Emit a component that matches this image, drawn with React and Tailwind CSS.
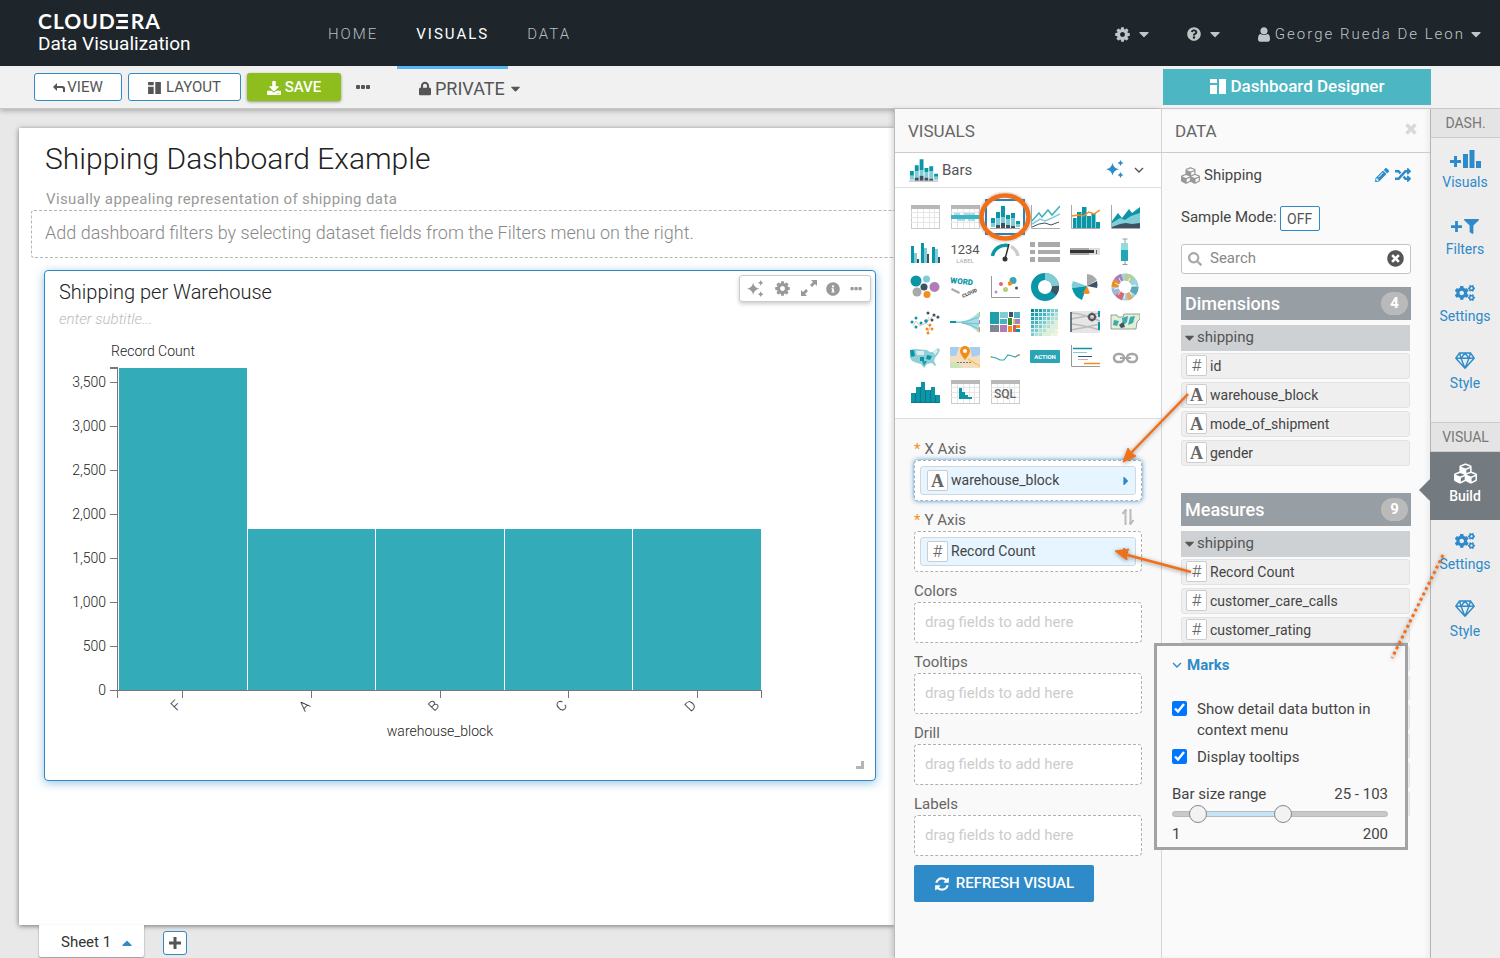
import { useState } from "react";
import { clsx } from "clsx";
import {
	FaCaretDown,
	FaCaretRight,
	FaCaretUp,
	FaCogs,
	FaCubes,
	FaDownload,
	FaFilter,
	FaInfoCircle,
	FaLock,
	FaPencilAlt,
	FaQuestionCircle,
	FaRandom,
	FaSearch,
	FaTimesCircle,
} from "react-icons/fa";

const TEAL = "#0b96a8";
const SKY = "#80cdd8";
const SLATE = "#3d5263";
const GRAY = "#a9a9a9";
const ORANGE = "#f28c1c";

const CogIcon = ({ className }) => (
	<svg className={className} viewBox="0 0 1792 1792" fill="currentColor">
		<path d="M1152 896q0-106-75-181t-181-75-181 75-75 181 75 181 181 75 181-75 75-181zm512-109v222q0 12-8 23t-20 13l-185 28q-19 54-39 91 35 50 107 138 10 12 10 25t-9 23q-27 37-99 108t-94 71q-12 0-26-9l-138-108q-44 23-91 38-16 136-29 186-7 28-36 28h-222q-14 0-24.500-8.500t-11.500-21.500l-28-184q-49-16-90-37l-141 107q-10 9-25 9-14 0-25-11-126-114-165-168-7-10-7-23 0-12 8-23 15-21 51-66.500t54-70.500q-27-50-41-99l-183-27q-13-2-21-12.500t-8-23.500v-222q0-12 8-23t19-13l186-28q14-46 39-92-40-57-107-138-10-12-10-24 0-10 9-23 26-36 98.500-107.500t94.500-71.500q13 0 26 10l138 107q44-23 91-38 16-136 29-186 7-28 36-28h222q14 0 24.500 8.500t11.500 21.500l28 184q49 16 90 37l142-107q9-9 24-9 13 0 25 10 129 119 165 170 7 8 7 22 0 12-8 23-15 21-51 66.500t-54 70.500q26 50 41 98l183 28q13 2 21 12.500t8 23.500z" />
	</svg>
);

const UserIcon = ({ className }) => (
	<svg className={className} viewBox="256 0 1280 1792" fill="currentColor">
		<path d="M1536 1399q0 109-62.500 187t-150.500 78h-854q-88 0-150.500-78t-62.500-187q0-85 8.500-160.500t31.500-152 58.500-131 94-89 134.500-34.500q131 128 313 128t313-128q76 0 134.500 34.500t94 89 58.500 131 31.500 152 8.500 160.500zm-256-887q0 159-112.500 271.500t-271.500 112.500-271.500-112.500-112.500-271.500 112.500-271.500 271.500-112.500 271.500 112.500 112.500 271.500z" />
	</svg>
);

const RefreshIcon = ({ className }) => (
	<svg className={className} viewBox="0 0 1792 1792" fill="currentColor">
		<path d="M1639 1056q0 5-1 7-64 268-268 434.500t-478 166.500q-146 0-282.500-55t-243.500-157l-129 129q-19 19-45 19t-45-19-19-45v-448q0-26 19-45t45-19h448q26 0 45 19t19 45-19 45l-137 137q71 66 161 102t187 36q134 0 250-65t186-179q11-17 53-117 8-23 30-23h192q13 0 22.500 9.500t9.500 22.500zm25-800v448q0 26-19 45t-45 19h-448q-26 0-45-19t-19-45 19-45l138-138q-148-137-349-137-134 0-250 65t-186 179q-11 17-53 117-8 23-30 23h-199q-13 0-22.500-9.500t-9.500-22.500v-7q65-268 270-434.500t480-166.500q146 0 284 55.500t245 156.500l130-129q19-19 45-19t45 19 19 45z" />
	</svg>
);

const LayoutIcon = ({ className }) => (
	<svg className={className} viewBox="0 0 16 15" fill="currentColor">
		<path d="M0 0h7v4H0zM0 6h7v9H0zM9 0h7v15H9z" />
	</svg>
);

const SparkleIcon = ({ className }) => (
	<svg className={className} viewBox="0 0 18 18" fill="currentColor">
		<path d="M6.500 3Q7.500 8.300 13 9.300 7.500 10.300 6.500 15.600 5.500 10.300 0 9.300 5.500 8.300 6.500 3Z" />
		<path d="M14.500 0q.5 2.500 3 3-2.500.5-3 3-.5-2.500-3-3 2.500-.5 3-3ZM14.500 12q.5 2.500 3 3-2.500.5-3 3-.5-2.500-3-3 2.500-.5 3-3Z" />
	</svg>
);

const DotsIcon = ({ className }) => (
	<svg className={className} viewBox="0 0 15 5" fill="currentColor">
		<rect width="4" height="4" rx="1" />
		<rect x="5" width="4" height="4" rx="1" />
		<rect x="10" width="4" height="4" rx="1" />
	</svg>
);

const BackIcon = ({ className }) => (
	<svg className={className} viewBox="0 0 12 10" fill="currentColor">
		<path d="M4 0v3h5.500Q12 3 12 5.500V9h-2V6.500Q10 5 9 5H4v3L0 4Z" />
	</svg>
);

const PlusIcon = ({ className }) => (
	<svg className={className} viewBox="0 0 12 12" fill="currentColor">
		<path d="M4.500 0h3v4.500H12v3H7.500V12h-3V7.500H0v-3h4.500z" />
	</svg>
);

const CloseIcon = ({ className }) => (
	<svg className={className} viewBox="0 0 12 12" stroke="currentColor" strokeWidth="3.500">
		<path d="m1.500 1.500 9 9M10.500 1.500l-9 9" />
	</svg>
);

const ExpandIcon = ({ className }) => (
	<svg className={className} viewBox="0 0 16 16" fill="currentColor">
		<path d="M10 0h6v6l-2-2-3 3-2-2 3-3ZM0 16v-6l2 2 3-3 2 2-3 3 2 2Z" />
	</svg>
);

const DiamondIcon = ({ className }) => (
	<svg
		className={className}
		viewBox="0 0 20 17"
		fill="none"
		stroke="currentColor"
		strokeWidth="1.4"
		strokeLinejoin="round"
	>
		<path d="M4.500 1h11L19.200 6.200 10 16.200.8 6.200ZM.8 6.200h18.400M6 6.200l4 10 4-10L10 1Z" />
		<path d="M4.500 1 6 6.200M15.500 1 14 6.200" />
	</svg>
);

const AddVisualIcon = ({ className }) => (
	<svg className={className} viewBox="0 0 31 18" fill="currentColor">
		<path d="M4 6h3v4h4v3H7v4H4v-4H0v-3h4zM13 4h5v14h-5zM19.500 0h5v18h-5zM26 11h5v7h-5z" />
	</svg>
);

const ChevronIcon = ({ className }) => (
	<svg
		className={className}
		viewBox="0 0 10 6"
		fill="none"
		stroke="currentColor"
		strokeWidth="1.4"
	>
		<path d="m1 1 4 4 4-4" />
	</svg>
);

const SwapIcon = ({ className }) => (
	<svg
		className={className}
		viewBox="0 0 12 16"
		fill="none"
		stroke="currentColor"
		strokeWidth="2"
	>
		<path d="M3.500 16V2M.5 5l3-4 1 1.500M8.500 0v14M11.500 11l-3 4-1-1.500" />
	</svg>
);

const gridLines = (
	<path
		d="M1 9.500h28M1 14.500h28M1 19.500h28M7.500 5v20M13.500 5v20M19.500 5v20M24.500 5v20"
		stroke="#e6e6e6"
		fill="none"
	/>
);

const tableFrame = (
	<>
		<rect x="1.500" y="3.500" width="28" height="22" fill="#fff" stroke="#ccc" />
		{gridLines}
		<rect x="1" y="2" width="29" height="4" fill="#b8b8b8" />
	</>
);

const stackedBars = (
	<>
		<path
			d="M1 15h4v5H1zM6 9h4v6H6zM11 3h4v11h-4zM16 12h4v4h-4zM21 10h4v5h-4zM26 18h4v3h-4z"
			fill={TEAL}
		/>
		<path
			d="M1 20h4v4H1zM6 15h4v8H6zM11 14h4v6h-4zM16 16h4v6h-4zM21 15h4v8h-4zM26 21h4v3h-4z"
			fill={SKY}
		/>
		<path d="M6 22h4v3H6zM11 20h4v5h-4zM16 22h4v3h-4zM21 23h4v2h-4z" fill={SLATE} />
		<path d="M0 25.500h30" stroke="#aaa" />
	</>
);

const axes = <path d="M1.500 2v23.500H30" stroke="#aaa" fill="none" />;

const heatColors = ["#0b7f90", "#1f9dae", "#46b4c0", "#7ccbd0", "#b0dfd3", "#e3f1d0", "#f7f6d6"];

// thumbnails of the chart types, all on a 30x28 canvas
const chartTypes = [
	["Table", tableFrame],
	[
		"Crosstab",
		<>
			{tableFrame}
			<rect x="1" y="12" width="29" height="4" fill="#3fb4c2" />
			<path d="M4 10h6v2H4zM14 10h11v2H14zM7 16h8v2H7zM18 16h7v2h-7z" fill="#a8e0e6" />
		</>,
	],
	["Bars", stackedBars],
	[
		"Lines",
		<g fill="none">
			{axes}
			<path d="m2 18 7-8 3 4 6-7 4 5 8-9" stroke="#3fb0bf" strokeWidth="1.500" />
			<path d="m2 21 8-5 5 2 7-3 8-4" stroke={SKY} strokeWidth="1.500" />
			<path d="m2 24 7-3 6-1 6 2 8-3" stroke={SLATE} />
		</g>,
	],
	[
		"Combo",
		<>
			{axes}
			<path
				d="M3 15h3.500v10H3zM7 9h4.500v16H7zM12 4h4.500v21H12zM17 13h4v12h-4zM21.500 10h4v15h-4zM26 19h4v6h-4z"
				fill={TEAL}
			/>
			<path d="m2 13 6-1 5 1 6-4 5 2 6-4" fill="none" stroke={ORANGE} strokeWidth="1.500" />
		</>,
	],
	[
		"Areas",
		<>
			<path d="m2 18 6-8 4 5 7-9 3 4 8-6v21H2z" fill={TEAL} />
			<path d="m2 20 8-5 5 2 6-4 9-3v15H2z" fill={SKY} />
			<path d="m2 24 8-3 6-1 6 1 8-1v5H2z" fill={SLATE} />
			{axes}
		</>,
	],
	[
		"Grouped Bars",
		<>
			<path d="M1 8h3v17H1zM11 5h3v20h-3zM22 9h3v16h-3z" fill={TEAL} />
			<path d="M4 15h3v10H4zM14 10h3v15h-3zM25 11h3v14h-3z" fill={SKY} />
			<path d="M7 21h2v4H7zM17 16h2v9h-2zM28 19h2v6h-2z" fill={SLATE} />
		</>,
	],
	[
		"KPI",
		<g fontFamily="Roboto" textAnchor="middle">
			<text x="15" y="16" fontSize="13" fill="#555">
				1234
			</text>
			<text x="15" y="25" fontSize="6" fill="#aaa">
				LABEL
			</text>
		</g>,
	],
	[
		"Gauge",
		<g fill="none" strokeWidth="3.500">
			<path d="M2.500 18A13 13 0 0 1 18 7.500" stroke={TEAL} />
			<path d="M21 8.500A13 13 0 0 1 28 18" stroke="#ccc" />
			<path d="M15 21 19 6" stroke="#333" strokeWidth="1.500" />
			<circle cx="15" cy="21" r="2.500" fill="#333" stroke="none" />
		</g>,
	],
	[
		"List",
		<path
			d="M0 4h5v5H0zM8 4h22v5H8zM0 12h5v4H0zM8 12h22v4H8zM0 19h5v5H0zM8 19h22v5H8z"
			fill="#aaa"
		/>,
	],
	[
		"Bullet",
		<>
			<rect y="10" width="30" height="7" fill="#ddd" />
			<rect y="10" width="19" height="7" fill="#aaa" />
			<rect y="12" width="24" height="3" fill="#333" />
			<rect x="26" y="12" width="1" height="4" fill="#666" />
		</>,
	],
	[
		"Box Plot",
		<>
			<path d="M15 1v26M12.500 1h5M12.500 26.500h5" stroke="#999" />
			<rect x="11" y="5" width="7" height="7" fill="#8fdbe2" />
			<rect x="11" y="12" width="7" height="11" fill="#1fa7b6" />
		</>,
	],
	[
		"Bubbles",
		<>
			<circle cx="6" cy="8" r="5.500" fill={TEAL} />
			<circle cx="16.500" cy="6" r="3.500" fill={SKY} />
			<circle cx="24.500" cy="14" r="5" fill="#b07cb8" />
			<circle cx="14" cy="14" r="3.500" fill={SLATE} />
			<circle cx="7" cy="19" r="4.500" fill={GRAY} />
			<circle cx="17" cy="21.500" r="3.500" fill={ORANGE} />
		</>,
	],
	[
		"Word Cloud",
		<g fontFamily="Roboto" fontWeight="900">
			<text x="0" y="10" fontSize="8" fill={TEAL} transform="rotate(6 0 10)">
				WORD
			</text>
			<text x="13" y="25" fontSize="5" fill="#555" transform="rotate(-25 13 25)">
				CLOUD
			</text>
			<path d="m2 15 8 4-1 2-8-4z" fill="#aaa" />
		</g>,
	],
	[
		"Scatter",
		<>
			<path d="M1.500 3v21.500H30" stroke="#999" fill="none" />
			<circle cx="23" cy="7.500" r="3.500" fill="#3aa5b3" />
			<circle cx="20" cy="10.500" r="2.200" fill={ORANGE} />
			<circle cx="11" cy="11" r="2" fill="#e8636b" />
			<circle cx="15.500" cy="16.500" r="2.500" fill="#b6cf7a" />
			<circle cx="6" cy="19" r="1.500" fill="#c08fc6" />
			<circle cx="26.500" cy="15" r="1.500" fill={SLATE} />
		</>,
	],
	[
		"Donut",
		<g fill="none" strokeWidth="7">
			<circle cx="15" cy="14" r="10.500" stroke={TEAL} />
			<path d="M15 3.500a10.500 10.500 0 0 1 10.500 10.500" stroke={SKY} />
			<path d="M25.500 13a10.500 10.500 0 0 1-2 7" stroke={SLATE} />
		</g>,
	],
	[
		"Radial",
		<>
			<path d="M17 13V1q6 0 10 6z" fill={GRAY} />
			<path d="m17 13 10-5q1 4 0 7z" fill={SLATE} />
			<path d="M17 13 3 8q-2 4-1 7z" fill={SKY} />
			<path d="M17 13 2 15q2 9 10 12z" fill={TEAL} />
			<path d="m17 13-4 7q4 2 7 0z" fill={ORANGE} />
		</>,
	],
	[
		"Chord",
		<g fill="none" strokeWidth="7">
			<circle cx="15" cy="14" r="10" stroke="#9fd3dc" />
			<path d="M15 4a10 10 0 0 1 7 3" stroke="#b6cf9a" />
			<path d="M7 8a10 10 0 0 1 5-4" stroke="#b07cb8" />
			<path d="M5 14a10 10 0 0 1 2-6" stroke={ORANGE} />
			<path d="M7 20a10 10 0 0 1-2-5" stroke="#9db8d8" />
			<path d="M13 24a10 10 0 0 1-5-4" stroke="#d4687c" />
			<path d="M21 22a10 10 0 0 1-4 2" stroke="#e9a66a" />
			<path d="M25 14a10 10 0 0 1-2 6" stroke="#5aa7b8" />
			<path
				d="m9 5 2 4M5 10l4 2M4 16l5-1M8 22l3-4M20 5l-2 4M26 12l-5 1M22 22l-3-4M14 26l1-5"
				stroke="#fff"
				strokeWidth=".8"
			/>
		</g>,
	],
	[
		"Network",
		<>
			<path d="m3 18 3-5 4 5 6-3 3-6M16 15l5-5 3-3 4 4M16 15l4 4-2 5" stroke="#ccc" fill="none" />
			<g fill={TEAL}>
				<circle cx="2" cy="14" r="1.500" />
				<circle cx="6" cy="10" r="1.500" />
				<circle cx="6" cy="19" r="1.500" />
				<circle cx="11" cy="15" r="1.500" />
				<circle cx="16" cy="13" r="1.800" />
			</g>
			<g fill={SLATE}>
				<circle cx="18" cy="5" r="1.500" />
				<circle cx="24" cy="7" r="1.500" />
				<circle cx="28" cy="9" r="1.500" />
				<circle cx="22" cy="12" r="1.500" />
			</g>
			<g fill={ORANGE}>
				<circle cx="20" cy="17" r="1.500" />
				<circle cx="17" cy="21" r="1.500" />
				<circle cx="22" cy="21" r="1.500" />
				<circle cx="18" cy="25" r="1.500" />
			</g>
		</>,
	],
	[
		"Flow",
		<>
			<path d="M0 14h10Q20 13 29 4v21Q20 16 10 15H0z" fill="#a9dce3" />
			<path d="M4 14h8q8-1 17-5M12 15q8 0 17 1M12 15q8 1 17 6" stroke="#5cbcc8" fill="none" strokeWidth=".8" />
			<path d="M0 14h6" stroke={TEAL} strokeWidth="2" />
			<path d="M29.500 4v5" stroke="#b6cf7a" />
			<path d="M29.500 12v4" stroke="#b07cb8" />
			<path d="M29.500 19v5" stroke={ORANGE} />
		</>,
	],
	[
		"Treemap",
		<>
			<path d="M0 4h9v12H0z" fill="#1d9fae" />
			<path d="M10 4h8v6h-8z" fill={SKY} />
			<path d="M10 11h7v5h-7zM24 4h6v6h-6z" fill="#46b4c0" />
			<path d="M0 17h9v7H0z" fill="#7c8793" />
			<path d="M10 17h7v7h-7zM25 11h5v5h-5z" fill="#b07cb8" />
			<path d="M18 10h4v7h-4z" fill="#3f8a2c" />
			<path d="M19 4h4v5h-4z" fill={SLATE} />
			<path d="M18 18h4v6h-4zM26 17h4v3h-4z" fill={ORANGE} />
			<path d="M23 17h3v7h-3z" fill="#d4586a" />
			<path d="M23 11h2v5h-2z" fill="#b6cf7a" />
			<path d="M26 21h4v3h-4z" fill={TEAL} />
		</>,
	],
	[
		"Heat Map",
		<>
			<rect x="1" y="1" width="27" height="27" fill="#d8efec" />
			{[0, 1, 2, 3, 4, 5, 6].map((row) =>
				[0, 1, 2, 3, 4, 5, 6].map((col) => (
					<rect
						key={row + "-" + col}
						x={1 + col * 4}
						y={1 + row * 4}
						width="3"
						height="3"
						fill={heatColors[Math.round((row + col) / 2)]}
					/>
				))
			)}
		</>,
	],
	[
		"Sankey",
		<>
			<rect x="1" y="3" width="29" height="22" fill="#e6e6e6" />
			<path d="M1 5q10 0 29 8M1 11q12-2 29-6M1 16q12 1 29 6M1 22q12-2 29-6" stroke="#bbb" strokeWidth="1.500" fill="none" />
			<path d="M1 4v20" stroke={SLATE} strokeWidth="1.500" />
			<path d="M29 3v6M29 14v8" stroke={TEAL} strokeWidth="2" />
			<circle cx="22" cy="9" r="3" fill="none" stroke="#555" strokeWidth="2" />
			<path d="M22 4.500v9M17.500 9h9" stroke="#555" strokeDasharray="1.500 6" strokeWidth="1.500" />
		</>,
	],
	[
		"Map",
		<>
			<path d="M1 7h6l1 2h5l1-3h16v5l-3 3-1 7H1z" fill="#dff0d4" stroke="#888" strokeWidth=".8" />
			<path d="m4 12 5 1-2 5-4-1zM12 10l6-2-1 6-4 4zM20 9l5-1-2 7-5 2z" fill="#3fa9b2" />
			<path d="m9 17 4-3 2 5-4 1z" fill={SLATE} />
		</>,
	],
	[
		"US Map",
		<>
			<path
				d="m0 7 5-1 12 1 3 2 3 0 5-4 2 2-2 4-3 4-1 3 2 4-1 1-3-3-5 1-3 4-3-4-4-1-5-2-3-5z"
				fill="#8fd0d8"
			/>
			<path d="m0 7 4 0 1 6-4 1zM10 14h4v4h-4zM17 12l5 1-2 4-4-1z" fill={TEAL} />
			<path d="M6 8h8v4H7zM23 9l4-3 1 2-3 4z" fill="#dcecee" />
			<path d="m12 18 5 0-3 5z" fill="#1d9fae" />
		</>,
	],
	[
		"Interactive Map",
		<>
			<rect y="4" width="30" height="21" fill="#f2dfc2" />
			<path d="M0 4h9l-3 9H0zM20 4h10v8l-8 2z" fill="#a9cdf2" />
			<path d="M0 19h8l4 6H0z" fill="#cfe3b8" />
			<path d="m18 16 12 7" stroke="#f6c95c" strokeWidth="1.500" />
			<path d="M15 17q-5-6-5-9a5 5 0 0 1 10 0q0 3-5 9Z" fill={ORANGE} />
			<circle cx="15" cy="8" r="2" fill="#fff" />
			<path d="M7 19.500h15" stroke="#777" strokeDasharray="2 1" />
		</>,
	],
	[
		"Sparklines",
		<>
			<path d="m1 14 5 1 4 2 4 0 4-5 4 1 3 1 4-2" stroke="#2fa9b8" fill="none" strokeWidth="1.200" />
			<circle cx="1.500" cy="14" r="1" fill="#9fc24a" />
			<circle cx="29" cy="12" r="1" fill={ORANGE} />
		</>,
	],
	[
		"Action Button",
		<>
			<rect y="7" width="30" height="13" rx="1" fill="#2ba5b5" />
			<text x="15" y="16" fontSize="6" fontWeight="700" fontFamily="Roboto" fill="#fff" textAnchor="middle">
				ACTION
			</text>
		</>,
	],
	[
		"Timeline",
		<>
			<path d="M1.500 2v21.500H30" stroke="#999" fill="none" />
			<path d="M3 5.500h19" stroke={TEAL} strokeWidth="1.500" />
			<path d="M3 9.500h14" stroke={SKY} />
			<path d="M8 13.500h14" stroke={SLATE} />
			<path d="M8 16.500h10" stroke="#c9a9ce" />
			<path d="M14 20.500h16" stroke={ORANGE} strokeWidth="1.500" />
		</>,
	],
	[
		"External Link",
		<g fill="none" stroke="#a6a6a6" strokeWidth="2.500">
			<rect x="4" y="11" width="10" height="8" rx="4" />
			<rect x="17" y="11" width="10" height="8" rx="4" />
			<path d="M10 15h11" strokeWidth="2" />
		</g>,
	],
	[
		"Histogram",
		<>
			<path
				d="M1 15h4v9H1zM6 9h4v15H6zM11 4h4v20h-4zM16 12h4v12h-4zM21 9h4v15h-4zM26 17h4v7h-4z"
				fill={TEAL}
			/>
			<path d="M5.500 15v9M10.500 9v15M15.500 12v12M20.500 12v12M25.500 17v7" stroke="#0a7888" />
			<path d="M1 24.500h29" stroke="#0a7888" />
		</>,
	],
	[
		"Correlation",
		<>
			{tableFrame}
			<path d="M9 10h3v11H9zM12 14h3v7h-3zM15 17h3v4h-3zM18 19h4v2h-4z" fill={TEAL} />
		</>,
	],
	[
		"SQL",
		<>
			{tableFrame}
			<text x="15" y="20" fontSize="12" fontWeight="500" fontFamily="Roboto" fill="#666" textAnchor="middle">
				SQL
			</text>
		</>,
	],
];

const bars = [
	{ label: "F", value: 3660 },
	{ label: "A", value: 1833 },
	{ label: "B", value: 1833 },
	{ label: "C", value: 1833 },
	{ label: "D", value: 1833 },
];

const yTicks = [0, 500, 1000, 1500, 2000, 2500, 3000, 3500];

function NavTab({ active, children }) {
	return (
		<a
			href="#"
			className={clsx(
				"relative flex items-center px-[19px] pt-[2px] text-[15px] tracking-[2px]",
				active ? "text-white" : "font-light text-[#b6bfc2]"
			)}
		>
			{children}
			{active && (
				<span className="absolute inset-x-0 -bottom-[3px] z-10 h-[3px] bg-[#55b5f5]"></span>
			)}
		</a>
	);
}

function Header() {
	return (
		<header className="flex h-[66px] items-stretch bg-[#1e252b] pr-4 pl-[38px]">
			<div className="flex w-[271px] flex-col pt-[10px] text-white">
				<div className="flex items-center font-[Lato,sans-serif] text-[21px] leading-[22px] font-bold tracking-[1px]">
					CLOUD
					<svg className="mr-[3px] h-[15px] w-3" viewBox="0 0 11 14" fill="currentColor">
						<path d="M0 0h11v2.600H0zM2 5.700h9v2.600H2zM0 11.400h11V14H0z" />
					</svg>
					RA
				</div>
				<div className="text-[19px] leading-6">Data Visualization</div>
			</div>

			<nav className="flex">
				<NavTab>HOME</NavTab>
				<NavTab active>VISUALS</NavTab>
				<NavTab>DATA</NavTab>
			</nav>

			<div className="ml-auto flex items-center gap-[35px] pt-[2px] text-[15px] text-[#c0c5c7]">
				<button type="button" aria-label="Settings" className="flex items-center gap-[5px]">
					<CogIcon className="size-[17px]" />
					<FaCaretDown className="size-4" />
				</button>
				<button type="button" aria-label="Help" className="flex items-center gap-[6px]">
					<FaQuestionCircle className="size-[14px]" />
					<FaCaretDown className="size-4" />
				</button>
				<button type="button" className="flex items-center">
					<UserIcon className="mr-[5px] h-[17px] w-3" />
					<span className="font-light tracking-[2px]">George Rueda De Leon</span>
					<FaCaretDown className="ml-[3px] size-4" />
				</button>
			</div>
		</header>
	);
}

function Toolbar() {
	const outline =
		"flex h-7 items-center justify-center rounded-[3px] border border-[#2e8ac8] bg-white pt-[1px] text-[15px] text-[#555]";

	return (
		<div className="relative flex h-[43px] items-center border-b border-[#c8c8c8] bg-[#f1f1f1] pr-[69px] pl-[34px] text-[#555] shadow-[0_2px_5px_rgba(0,0,0,0.25)]">
			<button type="button" className={clsx(outline, "w-[88px]")}>
				<BackIcon className="mr-[2px] h-[10px] w-3" />
				VIEW
			</button>
			<button type="button" className={clsx(outline, "ml-[6px] w-[113px]")}>
				<LayoutIcon className="mr-[5px] h-3 w-[13px]" />
				LAYOUT
			</button>
			<button
				type="button"
				className="ml-[6px] flex h-7 w-[94px] items-center justify-center rounded-[3px] bg-[#8dbe1e] pt-[1px] text-[15px] font-medium text-white shadow-[0_1px_3px_rgba(0,0,0,0.4)]"
			>
				<FaDownload className="mr-1 size-[14px]" />
				SAVE
			</button>
			<button type="button" aria-label="More" className="ml-[15px]">
				<DotsIcon className="h-[5px] w-[15px]" />
			</button>
			<button type="button" className="ml-12 flex items-center pt-[2px] text-[18px]">
				<FaLock className="mr-1 h-[15px] w-3" />
				PRIVATE
				<FaCaretDown className="ml-[3px] size-[15px]" />
			</button>
			<button
				type="button"
				className="mt-[-1px] ml-auto flex h-9 w-[268px] items-center justify-center bg-[#4cb6c3] text-[17px] font-medium text-white"
			>
				<LayoutIcon className="mr-[5px] h-[15px] w-4" />
				Dashboard Designer
			</button>
		</div>
	);
}

function BarChart() {
	const left = 73;
	const bottom = 354;
	const step = 643 / bars.length;
	const scale = 44 / 500;
	const edge = (i) => left + Math.round(i * step);

	return (
		<svg
			className="block h-[410px] w-[800px] text-[14px] font-light"
			viewBox="0 0 800 410"
			fontFamily="Roboto, sans-serif"
			fill="#222"
		>
			<text x={left + 35} y="20" textAnchor="middle">
				Record Count
			</text>

			{bars.map((bar, i) => (
				<rect
					key={bar.label}
					x={edge(i) + 1}
					y={bottom - Math.round(bar.value * scale)}
					width={edge(i + 1) - edge(i) - 1}
					height={Math.round(bar.value * scale)}
					fill="#34abb9"
				/>
			))}

			<g stroke="#777" fill="none" shapeRendering="crispEdges">
				<path d="M65 32.500h8M72.500 32v330M65 354.500h651M716 354v8" />
				<path d="M65 32h8" strokeWidth="2" />
				{yTicks.map((tick) => (
					<path key={tick} d={`M65 ${bottom + 0.5 - tick * scale}h8`} />
				))}
				{bars.map((bar, i) => (
					<path key={bar.label} d={`M${edge(i + 0.5)} 354v8`} />
				))}
			</g>

			{yTicks.map((tick) => (
				<text key={tick} x="61" y={bottom + 5 - tick * scale} textAnchor="end">
					{tick.toLocaleString("en-US")}
				</text>
			))}

			{bars.map((bar, i) => (
				<text
					key={bar.label}
					textAnchor="end"
					transform={`translate(${edge(i + 0.5)} 370) rotate(-45)`}
				>
					{bar.label}
				</text>
			))}

			<text x="395" y="400" textAnchor="middle">
				warehouse_block
			</text>
		</svg>
	);
}

function Card() {
	return (
		<section className="relative mt-3 mr-[18px] ml-[25px] h-[511px] overflow-visible rounded-[4px] border border-[#2e8ac8] bg-white pt-[8px] shadow-[0_2px_10px_rgba(46,138,200,0.5)]">
			<h2 className="pl-[14px] text-[20px] leading-[26px] font-light text-[#222]">
				Shipping per Warehouse
			</h2>
			<p className="pl-[14px] text-[15px] leading-[28px] font-light text-[#bbb] italic">
				enter subtitle...
			</p>
			<div className="pt-[3px]">
				<BarChart />
			</div>

			<div className="absolute top-1 right-1 flex h-[27px] w-[132px] items-center justify-between rounded-[3px] border border-[#ccc] bg-white px-[7px] text-[#999] shadow-[0_2px_4px_rgba(0,0,0,0.2)]">
				<button type="button" aria-label="AI visual">
					<SparkleIcon className="size-[17px]" />
				</button>
				<button type="button" aria-label="Settings">
					<CogIcon className="size-[17px]" />
				</button>
				<button type="button" aria-label="Expand" className="mb-[2px]">
					<ExpandIcon className="size-4" />
				</button>
				<button type="button" aria-label="Info">
					<FaInfoCircle className="size-[14px]" />
				</button>
				<button type="button" aria-label="More">
					<DotsIcon className="h-[4px] w-[13px]" />
				</button>
			</div>
			<span className="absolute right-[11px] bottom-[11px] size-2 border-r-[3px] border-b-[3px] border-[#b5b5b5]"></span>
		</section>
	);
}

function Workspace() {
	return (
		<main className="flex min-w-0 flex-1 flex-col overflow-hidden bg-[#e8e8e8] pt-[19px] pl-[19px]">
			<div className="flex-1 bg-white pt-[12px] shadow-[0_1px_5px_rgba(0,0,0,0.5)]">
				<h1 className="pl-[26px] text-[30px] leading-[38px] font-light text-[#222]">
					Shipping Dashboard Example
				</h1>
				<p className="pt-[10px] pl-[27px] text-[15px] leading-[22px] tracking-wide text-[#999]">
					Visually appealing representation of shipping data
				</p>
				<div className="ml-3 flex h-12 items-center rounded-l-[3px] border border-r-0 border-dashed border-[#b5b5b5] pb-[3px] pl-[13px] text-[18px] font-light whitespace-nowrap text-[#888]">
					Add dashboard filters by selecting dataset fields from the Filters menu on the
					right.
				</div>
				<Card />
			</div>
			<div className="relative flex h-[33px] items-center">
				<button
					type="button"
					className="relative mb-[1px] ml-5 flex h-8 w-[105px] items-center gap-2 rounded-b-[2px] bg-white pt-[3px] pl-[22px] text-[15px] text-[#333] shadow-[0_1px_2px_rgba(0,0,0,0.4)]"
				>
					Sheet 1
					<FaCaretUp className="size-4 text-[#2e8ac8]" />
				</button>
				<button
					type="button"
					aria-label="Add sheet"
					className="mt-[3px] ml-[19px] flex size-6 items-center justify-center rounded-[3px] border border-[#2e8ac8] bg-white text-[#555]"
				>
					<PlusIcon className="size-3" />
				</button>
			</div>
		</main>
	);
}

function TypeIcon({ type }) {
	return (
		<span
			className={clsx(
				"flex size-[21px] flex-shrink-0 items-center justify-center rounded-[2px] border border-[#ccc] bg-white text-[#666]",
				type == "A"
					? "font-['Liberation_Serif',serif] text-[18px]/none font-bold"
					: "text-[17px]/none font-light"
			)}
		>
			{type}
		</span>
	);
}

function Shelf({ label, required, active, field, swap }) {
	return (
		<div>
			<div className="flex h-[30px] items-center pt-2 text-[15px] text-[#666]">
				{required && <span className="mr-1 text-[#f59222]">*</span>}
				{label}
				{swap && (
					<button type="button" aria-label="Swap axes" className="mr-2 mb-[7px] ml-auto text-[#bbb]">
						<SwapIcon className="h-4 w-3" />
					</button>
				)}
			</div>
			<div
				className={clsx(
					"h-[41px] rounded-[4px] border border-dashed border-[#b0b0b0] bg-white p-[5px]",
					active && "shadow-[0_0_5px_rgba(46,138,200,0.9)]"
				)}
			>
				{field ? (
					<div className="flex h-[29px] items-center rounded-[3px] border border-[#d0d8de] bg-[#e6f5ff] pl-[6px] text-[14px] text-[#444]">
						<TypeIcon type={field.type} />
						<span className="ml-[3px]">{field.name}</span>
						<FaCaretRight className="mr-[2px] ml-auto size-[14px] text-[#2e8ac8]" />
					</div>
				) : (
					<div className="pl-[5px] text-[15px] leading-[28px] text-[#ccc]">
						drag fields to add here
					</div>
				)}
			</div>
		</div>
	);
}

function VisualsPanel() {
	return (
		<aside className="relative w-[267px] flex-shrink-0 border-l border-[#bbb] bg-[#f9f9f9] shadow-[-2px_0_5px_rgba(0,0,0,0.15)]">
			<h2 className="flex h-[44px] items-center border-b border-[#ccc] pt-[2px] pl-[13px] text-[17px] text-[#666]">
				VISUALS
			</h2>
			<div className="flex h-[35px] items-center border-b border-[#ddd] bg-white pr-[17px] pl-[14px] text-[15px] text-[#555]">
				<svg className="mr-1 h-7 w-[29px]" viewBox="0 0 30 28">
					{stackedBars}
				</svg>
				Bars
				<button type="button" aria-label="Suggest visual" className="mr-[10px] mb-[2px] ml-auto text-[#2e8ac8]">
					<SparkleIcon className="size-[18px]" />
				</button>
				<button type="button" aria-label="Collapse">
					<ChevronIcon className="h-[6px] w-[10px]" />
				</button>
			</div>

			<div className="grid grid-cols-[repeat(6,30px)] gap-x-[10px] gap-y-[7px] border-b border-[#ddd] bg-white pt-[15px] pb-3 pl-[15px]">
				{chartTypes.map(([name, drawing]) => (
					<button key={name} type="button" aria-label={name} className="relative h-7 w-[30px]">
						{name == "Bars" && (
							<>
								<span className="absolute -inset-x-[5px] -inset-y-[4px] border-2 border-[#2e7fb8]"></span>
								<svg
									className="absolute -top-[12px] -left-[12px] z-10 h-[52px] w-[54px]"
									viewBox="0 0 54 52"
									fill="none"
								>
									<ellipse cx="27" cy="26" rx="24" ry="22" stroke="#999" strokeWidth="7" opacity=".25" />
									<ellipse cx="27" cy="26" rx="23.500" ry="21.500" stroke="#f36f16" strokeWidth="4.500" />
								</svg>
							</>
						)}
						<svg className="block h-7 w-[30px]" viewBox="0 0 30 28">
							{drawing}
						</svg>
					</button>
				))}
			</div>

			<div className="pt-[11px] pr-[19px] pl-[19px]">
				<Shelf label="X Axis" required active field={{ type: "A", name: "warehouse_block" }} />
				<Shelf label="Y Axis" required swap field={{ type: "#", name: "Record Count" }} />
				<Shelf label="Colors" />
				<Shelf label="Tooltips" />
				<Shelf label="Drill" />
				<Shelf label="Labels" />
				<button
					type="button"
					className="mt-[9px] flex h-[37px] w-[180px] items-center justify-center gap-[6px] rounded-[2px] bg-[#2e8ac8] text-[15px] font-medium text-white"
				>
					<RefreshIcon className="size-4" />
					REFRESH VISUAL
				</button>
			</div>
		</aside>
	);
}

function FieldGroup({ title, count, fields, hiddenRows = 0 }) {
	return (
		<div>
			<h3 className="flex h-[33px] items-center justify-between bg-[#979ea4] pr-[3px] pl-1 text-[18px] font-medium text-white">
				{title}
				<span className="flex h-[23px] w-[27px] items-center justify-center rounded-full bg-[#bababa] text-[15px] font-bold">
					{count}
				</span>
			</h3>
			<div className="mt-[5px] mr-[1px] flex h-[26px] items-center bg-[#cdd1d4] pl-[1px] text-[15px] text-[#555]">
				<FaCaretDown className="size-[15px]" />
				shipping
			</div>
			<ul className="mt-[2px] mr-[1px] flex flex-col gap-[3px]">
				{fields.map((field) => (
					<li
						key={field.name}
						className="flex h-[26px] items-center rounded-[3px] border border-[#e2e2e2] bg-[#efefef] pl-1 text-[14px] text-[#444]"
					>
						<TypeIcon type={field.type} />
						<span className="ml-[3px] pt-[1px]">{field.name}</span>
					</li>
				))}
				{Array.from({ length: hiddenRows }, (_, i) => (
					<li
						key={i}
						className="h-[26px] rounded-[3px] border border-[#e2e2e2] bg-[#efefef]"
					></li>
				))}
			</ul>
		</div>
	);
}

function MarksPopup() {
	const [range, setRange] = useState([25, 103]);
	const percent = (value) => ((value - 1) / 199) * 100;
	const thumb =
		"pointer-events-none absolute -inset-x-[9px] top-0 h-[18px] appearance-none bg-transparent [&::-webkit-slider-thumb]:pointer-events-auto [&::-webkit-slider-thumb]:size-[18px] [&::-webkit-slider-thumb]:appearance-none [&::-webkit-slider-thumb]:rounded-full [&::-webkit-slider-thumb]:border [&::-webkit-slider-thumb]:border-[#888] [&::-webkit-slider-thumb]:bg-[#f2f2f2]";

	return (
		<div className="absolute top-[534px] -left-[8px] z-20 w-[254px] border-[3px] border-[#a3a3a3] bg-[#fafafa] pt-[8px] pr-[17px] pb-[3px] pl-[15px] text-[15px] text-[#444]">
			<h3 className="flex items-center leading-[22px] font-bold text-[#2e8ac8]">
				<ChevronIcon className="mr-[5px] h-[6px] w-[10px]" />
				Marks
			</h3>
			<label className="mt-[23px] flex items-start leading-[21px]">
				<input type="checkbox" defaultChecked className="mt-[2px] mr-[10px] size-[15px] flex-shrink-0" />
				Show detail data button in context menu
			</label>
			<label className="mt-[6px] flex items-start leading-[21px]">
				<input type="checkbox" defaultChecked className="mt-[2px] mr-[10px] size-[15px] flex-shrink-0" />
				Display tooltips
			</label>
			<div className="mt-[16px] flex justify-between leading-5">
				<span>Bar size range</span>
				<span>
					{range[0]} - {range[1]}
				</span>
			</div>
			<div className="relative mt-[1px] flex h-[18px] items-center">
				<div className="h-[6px] w-full overflow-hidden rounded-full border border-[#bbb] bg-[#c9c9c9]">
					<div
						className="h-full bg-[#c6e3f8]"
						style={{
							marginLeft: percent(range[0]) + "%",
							width: percent(range[1]) - percent(range[0]) + "%",
						}}
					></div>
				</div>
				<input
					type="range"
					aria-label="Smallest bar size"
					min="1"
					max="200"
					value={range[0]}
					onChange={(e) => setRange([+e.target.value, range[1]])}
					className={clsx(thumb, "w-[234px]")}
				/>
				<input
					type="range"
					aria-label="Largest bar size"
					min="1"
					max="200"
					value={range[1]}
					onChange={(e) => setRange([range[0], +e.target.value])}
					className={clsx(thumb, "w-[234px]")}
				/>
			</div>
			<div className="mt-[1px] flex justify-between leading-5">
				<span>1</span>
				<span>200</span>
			</div>
		</div>
	);
}

function DataPanel() {
	return (
		<aside className="relative w-[269px] flex-shrink-0 border-l border-[#d5d5d5] bg-[#fafafa] shadow-[inset_-3px_0_4px_rgba(0,0,0,0.05)]">
			<h2 className="flex h-[44px] items-center border-b border-[#ccc] pt-[2px] pr-[13px] pl-[13px] text-[17px] text-[#666]">
				DATA
				<button type="button" aria-label="Close" className="mb-[5px] ml-auto text-[#d8d8d8]">
					<CloseIcon className="size-3" />
				</button>
			</h2>
			<div className="pr-[19px] pl-[19px]">
				<div className="flex h-[44px] items-center text-[15px] text-[#444]">
					<FaCubes className="mr-1 size-[19px] text-[#999]" />
					Shipping
					<button type="button" aria-label="Edit dataset" className="mr-[6px] ml-auto text-[#2e8ac8]">
						<FaPencilAlt className="size-[14px]" />
					</button>
					<button type="button" aria-label="Change dataset" className="text-[#2e8ac8]">
						<FaRandom className="size-4" />
					</button>
				</div>
				<div className="mt-[9px] flex items-center text-[15px] text-[#444]">
					<span className="mb-[3px]">Sample Mode:</span>
					<button
						type="button"
						className="ml-[3px] h-[25px] w-10 rounded-[2px] border border-[#2e8ac8] bg-white pt-[2px] text-[14px] text-[#555]"
					>
						OFF
					</button>
				</div>
				<div className="mt-[12px] flex h-[30px] items-center rounded-[3px] border border-[#c4c4c4] bg-white px-[6px]">
					<FaSearch className="size-[14px] text-[#aaa]" />
					<input
						type="text"
						aria-label="Search fields"
						placeholder="Search"
						className="ml-2 min-w-0 flex-1 text-[15px] text-[#555] placeholder:text-[#888] focus:outline-none"
					/>
					<button type="button" aria-label="Clear search" className="text-[#555]">
						<FaTimesCircle className="size-[17px]" />
					</button>
				</div>
				<div className="mt-[13px]">
					<FieldGroup
						title="Dimensions"
						count={4}
						fields={[
							{ type: "#", name: "id" },
							{ type: "A", name: "warehouse_block" },
							{ type: "A", name: "mode_of_shipment" },
							{ type: "A", name: "gender" },
						]}
					/>
				</div>
				<div className="mt-[27px]">
					<FieldGroup
						title="Measures"
						count={9}
						fields={[
							{ type: "#", name: "Record Count" },
							{ type: "#", name: "customer_care_calls" },
							{ type: "#", name: "customer_rating" },
						]}
						hiddenRows={6}
					/>
				</div>
			</div>
			<MarksPopup />
		</aside>
	);
}

function RailButton({ icon, label, active }) {
	return (
		<button
			type="button"
			className={clsx(
				"relative flex w-full flex-col items-center pt-[10px] text-[14px]",
				active ? "h-[68px] bg-[#737b81] font-medium text-white" : "h-[67px] text-[#2e8ac8]"
			)}
		>
			{active && (
				<span className="absolute top-[27px] right-full border-y-[11px] border-r-[11px] border-y-transparent border-r-[#737b81]"></span>
			)}
			<span className="flex h-[22px] items-center">{icon}</span>
			<span className="mt-[2px] leading-5">{label}</span>
		</button>
	);
}

function Rail() {
	return (
		<aside className="relative w-[70px] flex-shrink-0 bg-[#ededed] shadow-[inset_1px_0_0_#b5b5b5]">
			<h2 className="ml-[1px] flex h-[29px] items-center justify-center border-b border-[#ccc] bg-[#e4e4e4] text-[14px] text-[#777]">
				DASH.
			</h2>
			<RailButton label="Visuals" icon={<AddVisualIcon className="h-[18px] w-[31px]" />} />
			<RailButton
				label="Filters"
				icon={
					<span className="flex items-center gap-[2px]">
						<PlusIcon className="size-[11px]" />
						<FaFilter className="size-[15px]" />
					</span>
				}
			/>
			<RailButton label="Settings" icon={<FaCogs className="size-5" />} />
			<RailButton label="Style" icon={<DiamondIcon className="h-[17px] w-5" />} />
			<h2 className="mt-4 ml-[1px] flex h-[30px] items-center justify-center border-y border-[#ccc] bg-[#e4e4e4] text-[14px] text-[#777]">
				VISUAL
			</h2>
			<RailButton active label="Build" icon={<FaCubes className="size-[23px]" />} />
			<RailButton label="Settings" icon={<FaCogs className="size-5" />} />
			<RailButton label="Style" icon={<DiamondIcon className="h-[17px] w-5" />} />
		</aside>
	);
}

// arrows that tie the fields to the shelves
function Annotations() {
	return (
		<svg
			className="pointer-events-none absolute top-[380px] right-[50px] z-30 h-[290px] w-[350px] drop-shadow-[0_1px_2px_rgba(0,0,0,0.4)]"
			viewBox="0 0 350 290"
			fill="none"
			stroke="#f36f16"
			strokeWidth="2.500"
		>
			<path d="M88 14 28 76" />
			<path d="m23 82 5-14 3 5 5 3Z" fill="#f36f16" strokeWidth="1" />
			<path d="M91 192 20 173" />
			<path d="m15 171 14-2-3 5 1 6Z" fill="#f36f16" strokeWidth="1" />
			<path d="M343 175 292 278" strokeWidth="3" strokeDasharray="3 3" />
		</svg>
	);
}

export default function App() {
	return (
		<div className="relative flex min-h-screen flex-col bg-[#e8e8e8] font-[Roboto,sans-serif]">
			<Header />
			<Toolbar />
			<div className="flex flex-1">
				<Workspace />
				<VisualsPanel />
				<DataPanel />
				<Rail />
			</div>
			<Annotations />
		</div>
	);
}
